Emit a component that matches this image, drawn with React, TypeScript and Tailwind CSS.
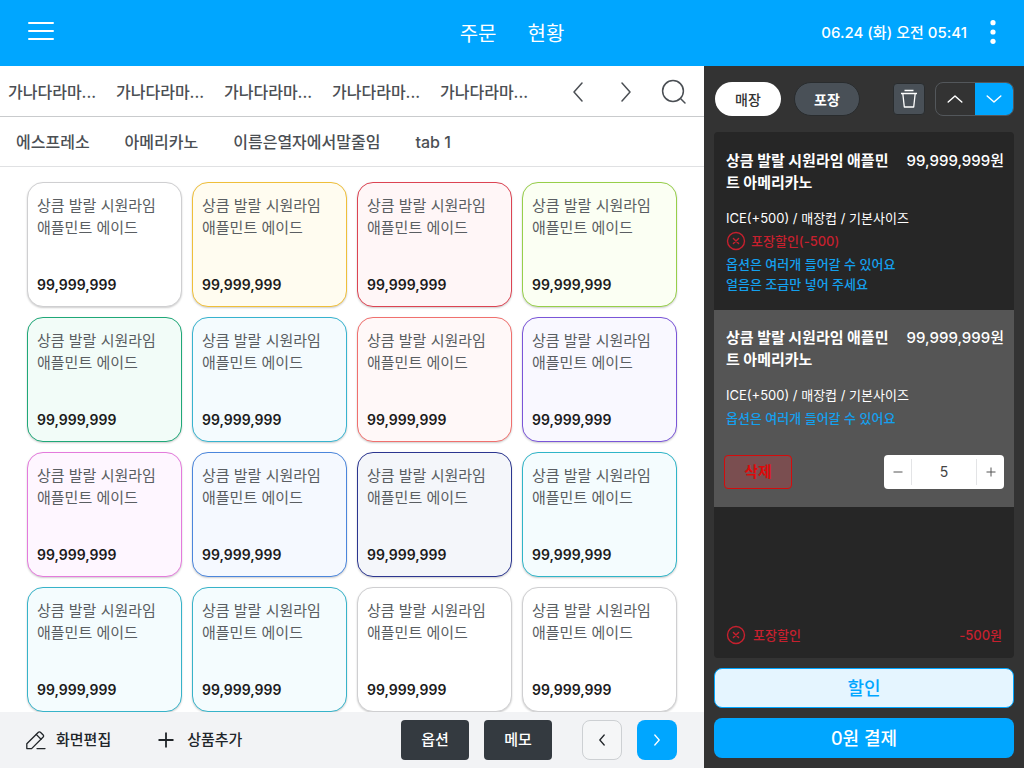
import { useState } from "react";
import clsx from "clsx";

const categories = ["가나다라마...", "가나다라마...", "가나다라마...", "가나다라마...", "가나다라마..."];
const subTabs = ["에스프레소", "아메리카노", "이름은열자에서말줄임", "tab 1"];

const productColors = [
  "border-[#cfcfd1] bg-white",
  "border-[#efbf3a] bg-[#fffcf0]",
  "border-[#dc4453] bg-[#fff6f7]",
  "border-[#97cf4a] bg-[#fbfff3]",
  "border-[#1fa878] bg-[#f2fcf8]",
  "border-[#37b3cf] bg-[#f4fbfe]",
  "border-[#f0706e] bg-[#fff8f8]",
  "border-[#7a55d8] bg-[#f9f8ff]",
  "border-[#e47bdc] bg-[#fef6ff]",
  "border-[#4b86dc] bg-[#f5f9ff]",
  "border-[#2c3690] bg-[#f4f6fa]",
  "border-[#2fb5c8] bg-[#f4fcfe]",
  "border-[#37b3c9] bg-[#f4fcfe]",
  "border-[#37b3c9] bg-[#f4fcfe]",
  "border-[#cfcfd1] bg-white",
  "border-[#cfcfd1] bg-white",
];

type ChevronProps = { d: string; className: string };

function Chevron({ d, className }: ChevronProps) {
  return (
    <svg viewBox="0 0 20 20" className={className} fill="none" stroke="currentColor" strokeLinecap="round" strokeLinejoin="round" aria-hidden="true">
      <path d={d} />
    </svg>
  );
}

function CircleX() {
  return (
    <svg viewBox="0 0 20 20" className="h-5 w-5 shrink-0" fill="none" stroke="currentColor" strokeWidth="1.4" strokeLinecap="round" aria-hidden="true">
      <circle cx="10" cy="10" r="8.5" />
      <path d="M7.4 7.4l5.2 5.2M12.6 7.4l-5.2 5.2" />
    </svg>
  );
}

function Header() {
  return (
    <header className="grid h-[66px] shrink-0 grid-cols-3 items-center bg-[#00a6ff] text-white">
      <button aria-label="메뉴" className="ml-7 w-[26px] pb-1">
        <svg viewBox="0 0 26 18" className="h-[18px] w-[26px]" stroke="currentColor" strokeWidth="2" strokeLinecap="round" aria-hidden="true">
          <path d="M1 1h24M1 9h24M1 17h24" />
        </svg>
      </button>
      <nav className="flex justify-center gap-[31px] pt-0.5 text-[20px] leading-6">
        <a href="#order">주문</a>
        <a href="#status">현황</a>
      </nav>
      <div className="flex items-center justify-end gap-4 pr-[21px]">
        <time className="text-[15px] font-medium leading-5 whitespace-nowrap">06.24 (화) 오전 05:41</time>
        <button aria-label="더보기" className="pb-0.5">
          <svg viewBox="0 0 20 26" className="h-[26px] w-5" fill="currentColor" aria-hidden="true">
            <circle cx="10" cy="3.7" r="2.6" />
            <circle cx="10" cy="13" r="2.6" />
            <circle cx="10" cy="22.3" r="2.6" />
          </svg>
        </button>
      </div>
    </header>
  );
}

function CategoryBar() {
  return (
    <div className="flex h-[51px] items-center border-b border-[#c9cbcd] pt-0.5 pr-[17px] pl-2">
      <div className="flex flex-1 gap-4">
        {categories.map((name, i) => (
          <button key={i} className="w-[92px] text-left text-[16px] font-medium leading-6 whitespace-nowrap">
            {name}
          </button>
        ))}
      </div>
      <div className="flex items-center gap-7">
        <button aria-label="이전 분류">
          <Chevron d="M14 1L6 10L14 19" className="h-5 w-5 stroke-[1.5]" />
        </button>
        <button aria-label="다음 분류">
          <Chevron d="M6 1L14 10L6 19" className="h-5 w-5 stroke-[1.5]" />
        </button>
      </div>
      <button aria-label="검색" className="ml-[25px]">
        <svg viewBox="0 0 26 26" className="h-[26px] w-[26px]" fill="none" stroke="currentColor" strokeWidth="1.5" strokeLinecap="round" aria-hidden="true">
          <circle cx="12" cy="12" r="10.4" />
          <path d="M19.5 19.5L24 24" />
        </svg>
      </button>
    </div>
  );
}

function SubTabs() {
  return (
    <div className="flex h-[50px] items-center gap-[35px] border-b border-[#e0e1e3] px-4">
      {subTabs.map((name) => (
        <button key={name} className="text-[16px] font-medium leading-6 whitespace-nowrap">
          {name}
        </button>
      ))}
    </div>
  );
}

function ProductGrid() {
  return (
    <div className="grid grid-cols-4 gap-[10px] px-[27px] pt-[15px]">
      {productColors.map((color, i) => (
        <button
          key={i}
          className={clsx("flex h-[125px] flex-col justify-between rounded-2xl border px-[9px] pt-3 pb-[11px] text-left shadow-[0_1px_2px_rgba(0,0,0,0.2)]", color)}
        >
          <span className="text-[15px] leading-[22px] text-[#5a5e62]">
            상큼 발랄 시원라임
            <br />
            애플민트 에이드
          </span>
          <span className="text-[14px] font-semibold leading-5 text-[#1b1b1b]">99,999,999</span>
        </button>
      ))}
    </div>
  );
}

function BottomBar() {
  return (
    <footer className="mt-auto flex h-14 shrink-0 items-center bg-[#f2f3f5] pr-[27px] pl-[26px] text-[15px] font-medium text-[#212529]">
      <button className="flex items-center gap-[10px]">
        <svg viewBox="0 0 20 20" className="h-5 w-5" fill="none" stroke="currentColor" strokeWidth="1.3" strokeLinecap="round" strokeLinejoin="round" aria-hidden="true">
          <path d="M.8 13.8L12.4 2.2a1.4 1.4 0 0 1 2 0l2.8 2.8a1.4 1.4 0 0 1 0 2L5.6 18.6H.8z" />
          <path d="M10.2 4.4l4.8 4.8M11 18.6h8" />
        </svg>
        화면편집
      </button>
      <button className="ml-[46px] flex items-center gap-3">
        <svg viewBox="0 0 18 18" className="h-[18px] w-[18px]" stroke="currentColor" strokeWidth="1.8" aria-hidden="true">
          <path d="M9 1.5v15M1.5 9h15" />
        </svg>
        상품추가
      </button>
      <div className="ml-auto flex gap-[15px]">
        <button className="h-10 w-[68px] rounded bg-[#343a40] text-white">옵션</button>
        <button className="h-10 w-[68px] rounded bg-[#343a40] text-white">메모</button>
        <button aria-label="이전 페이지" className="ml-[15px] grid h-10 w-10 place-items-center rounded-lg border border-[#cdd0d3] bg-[#f5f6f7]">
          <Chevron d="M12.2 5L7.8 10L12.2 15" className="h-5 w-5 stroke-[1.3]" />
        </button>
        <button aria-label="다음 페이지" className="grid h-10 w-10 place-items-center rounded-lg bg-[#00a6ff] text-white">
          <Chevron d="M7.8 5L12.2 10L7.8 15" className="h-5 w-5 stroke-[1.3]" />
        </button>
      </div>
    </footer>
  );
}

type CartItemProps = { discount?: string; memos: string[]; selected?: boolean };

function CartItem({ discount, memos, selected }: CartItemProps) {
  const [count, setCount] = useState(5);

  return (
    <li className={clsx("px-[10px] pt-[17px]", selected ? "bg-[#555555] pb-[18px]" : "pb-4")}>
      <div className="flex justify-between pl-0.5 text-[15px] leading-[22px] text-white">
        <h3 className="w-[166px] font-bold break-all">상큼 발랄 시원라임 애플민트 아메리카노</h3>
        <span className="font-medium">99,999,999원</span>
      </div>
      <div className="mt-[14px] flex flex-col gap-[3px] pl-0.5 text-[13px] leading-5">
        <p className="text-white">ICE(+500) / 매장컵 / 기본사이즈</p>
        {discount && (
          <p className="flex items-center gap-[5px] font-medium text-[#c6202e]">
            <CircleX />
            {discount}
          </p>
        )}
        <div className="font-medium text-[#14a0ee]">
          {memos.map((memo) => (
            <p key={memo}>{memo}</p>
          ))}
        </div>
      </div>
      {selected && (
        <div className="mt-[27px] flex justify-between">
          <button className="h-[34px] w-[68px] rounded border border-[#d40c0c] bg-[#7a4e50] text-[15px] font-bold text-[#dc0a0a]">삭제</button>
          <div className="flex h-[34px] w-[120px] items-center rounded bg-white text-[#555]">
            <button aria-label="수량 감소" onClick={() => setCount(Math.max(1, count - 1))} className="grid h-[26px] w-7 place-items-center border-r border-[#e3e4e6]">
              <svg viewBox="0 0 10 10" className="h-[10px] w-[10px]" stroke="currentColor" aria-hidden="true">
                <path d="M0.5 5h9" />
              </svg>
            </button>
            <input
              aria-label="수량"
              value={count}
              onChange={(e) => setCount(Number(e.target.value) || 0)}
              className="min-w-0 flex-1 text-center text-[14px] leading-5 text-[#444] outline-none"
            />
            <button aria-label="수량 증가" onClick={() => setCount(count + 1)} className="grid h-[26px] w-7 place-items-center border-l border-[#e3e4e6]">
              <svg viewBox="0 0 10 10" className="h-[10px] w-[10px]" stroke="currentColor" aria-hidden="true">
                <path d="M0.5 5h9M5 .5v9" />
              </svg>
            </button>
          </div>
        </div>
      )}
    </li>
  );
}

function OrderPanel() {
  return (
    <aside className="flex w-[320px] shrink-0 flex-col bg-[#333333] px-[10px] pb-[10px]">
      <div className="flex h-[66px] items-center">
        <button className="ml-px h-[34px] w-[66px] rounded-full bg-white text-[14px] font-medium text-[#333]">매장</button>
        <button className="ml-[13px] h-[34px] w-[66px] rounded-full border border-[#292c2e] bg-[#495057] text-[14px] font-bold text-white">포장</button>
        <button aria-label="전체 삭제" className="ml-auto grid h-8 w-8 place-items-center rounded border border-[#292c2e] bg-[#495057] text-white">
          <svg viewBox="0 0 18 20" className="h-5 w-[18px]" fill="none" stroke="currentColor" strokeWidth="1.3" strokeLinejoin="round" aria-hidden="true">
            <path d="M4.5 1.5h9M1 4.5h16M2.8 4.5l1.5 13.5h9.4l1.5-13.5" />
          </svg>
        </button>
        <div className="ml-[10px] flex h-[34px] w-[79px] overflow-hidden rounded-lg border border-[#53575b]">
          <button aria-label="위로" className="grid flex-1 place-items-center text-white">
            <Chevron d="M3.2 13L10 7L16.8 13" className="h-5 w-5 stroke-[1.5]" />
          </button>
          <button aria-label="아래로" className="grid flex-1 place-items-center bg-[#00a6ff] text-white">
            <Chevron d="M3.2 7L10 13L16.8 7" className="h-5 w-5 stroke-[1.5]" />
          </button>
        </div>
      </div>

      <section className="flex flex-1 flex-col rounded bg-[#262626] pt-px">
        <ul>
          <CartItem discount="포장할인(-500)" memos={["옵션은 여러개 들어갈 수 있어요", "얼음은 조금만 넣어 주세요"]} />
          <CartItem memos={["옵션은 여러개 들어갈 수 있어요"]} selected />
        </ul>
        <div className="mt-auto flex items-center pr-3 pb-[13px] pl-3 text-[13px] font-medium leading-5 text-[#c6202e]">
          <CircleX />
          <span className="ml-[7px]">포장할인</span>
          <span className="ml-auto">-500원</span>
        </div>
      </section>

      <button className="mt-[10px] h-10 shrink-0 rounded-lg border border-[#00a6ff] bg-[#e5f5ff] text-[18px] font-medium text-[#00a6ff]">할인</button>
      <button className="mt-[10px] h-10 shrink-0 rounded-lg bg-[#00a6ff] text-[18px] font-medium text-white">0원 결제</button>
    </aside>
  );
}

export default function App() {
  return (
    <div className="flex min-h-screen flex-col bg-white font-['Inter','Noto_Sans_CJK_KR',sans-serif]">
      <Header />
      <div className="flex flex-1">
        <main className="flex min-w-0 flex-1 flex-col text-[#4b4f54]">
          <CategoryBar />
          <SubTabs />
          <ProductGrid />
          <BottomBar />
        </main>
        <OrderPanel />
      </div>
    </div>
  );
}
